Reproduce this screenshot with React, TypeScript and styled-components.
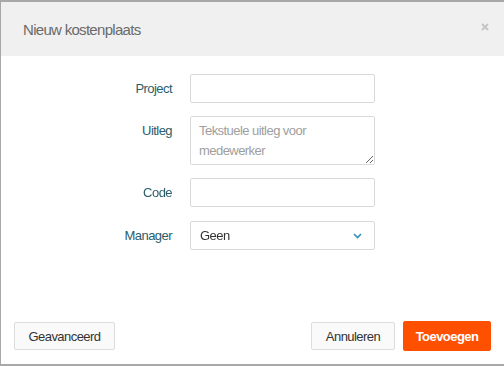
import React from 'react';
import styled, {createGlobalStyle} from 'styled-components';

const GlobalStyle = createGlobalStyle`
  html, body {
    margin: 0;
    padding: 0;
    background: #fff;
  }
  body {
    font-family: "Liberation Sans", Arial, sans-serif;
  }
`;

const Frame = styled.div`
  box-sizing: border-box;
  width: 504px;
  height: 366px;
  display: flex;
  flex-direction: column;
  border-top: 2px solid #a8a8a8;
  border-left: 1px solid #a8a8a8;
  border-bottom: 2px solid #a8a8a8;
  background: #fff;
`;

const Header = styled.div`
  height: 54px;
  display: flex;
  align-items: center;
  justify-content: space-between;
  padding: 0 15px 0 22px;
  background: #f0f0f0;
`;

const Title = styled.h4`
  margin: 0;
  font-size: 15px;
  letter-spacing: -0.7px;
  font-weight: normal;
  color: #6a6a6a;
`;

const Close = styled.button`
  border: 0;
  background: none;
  padding: 0;
  width: 8px;
  height: 8px;
  display: flex;
  margin-top: -4px;
  cursor: pointer;
`;

const Body = styled.form`
  flex: 1;
  display: grid;
  grid-template-columns: 171px 185px;
  column-gap: 18px;
  row-gap: 13px;
  align-content: start;
  padding-top: 18px;
`;

const Label = styled.label`
  justify-self: end;
  align-self: start;
  line-height: 29px;
  font-size: 13px;
  letter-spacing: -0.55px;
  color: #2b5d6b;
`;

const fieldBase = `
  box-sizing: border-box;
  width: 185px;
  border: 1px solid #d9d9d9;
  border-radius: 2px;
  background: #fff;
  font-family: "Liberation Sans", Arial, sans-serif;
  font-size: 13px;
  letter-spacing: -0.55px;
  color: #333;
  outline: none;
`;

const Input = styled.input`
  ${fieldBase};
  height: 29px;
  padding: 0 9px;
`;

const TextArea = styled.textarea`
  ${fieldBase};
  height: 49px;
  padding: 4px 8px;
  line-height: 20px;
  resize: vertical;

  &::placeholder {
    color: #9e9e9e;
  }
`;

const SelectWrap = styled.div`
  position: relative;
  width: 185px;
  margin-top: 1px;
`;

const Select = styled.select`
  ${fieldBase};
  height: 29px;
  padding: 0 9px;
  appearance: none;
`;

const Chevron = styled.svg`
  position: absolute;
  right: 13px;
  top: 12px;
  pointer-events: none;
`;

const Footer = styled.div`
  display: flex;
  align-items: center;
  padding: 0 13px 13px 13px;
`;

const Button = styled.button<{$primary?: boolean; $w: number; $h: number}>`
  box-sizing: border-box;
  width: ${p => p.$w}px;
  height: ${p => p.$h}px;
  border: 1px solid ${p => (p.$primary ? '#ff5000' : '#dcdcdc')};
  border-radius: 2px;
  background: ${p => (p.$primary ? '#ff5000' : '#fafafa')};
  color: ${p => (p.$primary ? '#fff' : '#333')};
  font-family: "Liberation Sans", Arial, sans-serif;
  font-size: 13px;
  letter-spacing: -0.55px;
  font-weight: ${p => (p.$primary ? 'bold' : 'normal')};
  padding: 0;
  cursor: pointer;
`;

const Right = styled.div`
  margin-left: auto;
  display: flex;
  align-items: center;
  gap: 8px;
`;

const App: React.FC = () => {
  return (
    <>
      <GlobalStyle/>
      <Frame>
        <Header>
          <Title>Nieuw kostenplaats</Title>
          <Close type="button" aria-label="Sluiten">
            <svg width="8" height="8" viewBox="0 0 8 8">
              <path d="M1 1L7 7M7 1L1 7" stroke="#c4c4c4" strokeWidth="1.8"/>
            </svg>
          </Close>
        </Header>
        <Body>
          <Label>Project</Label>
          <Input type="text"/>
          <Label>Uitleg</Label>
          <TextArea placeholder="Tekstuele uitleg voor medewerker"/>
          <Label>Code</Label>
          <Input type="text"/>
          <Label style={{marginTop: 1}}>Manager</Label>
          <SelectWrap>
            <Select defaultValue="geen">
              <option value="geen">Geen</option>
            </Select>
            <Chevron width="9" height="6" viewBox="0 0 9 6">
              <path d="M1 1L4.5 4.5L8 1" fill="none" stroke="#3090b8" strokeWidth="1.6"/>
            </Chevron>
          </SelectWrap>
        </Body>
        <Footer>
          <Button type="button" $w={101} $h={28}>Geavanceerd</Button>
          <Right>
            <Button type="button" $w={84} $h={28}>Annuleren</Button>
            <Button type="submit" $primary $w={88} $h={30}>Toevoegen</Button>
          </Right>
        </Footer>
      </Frame>
    </>
  );
};

export default App;
